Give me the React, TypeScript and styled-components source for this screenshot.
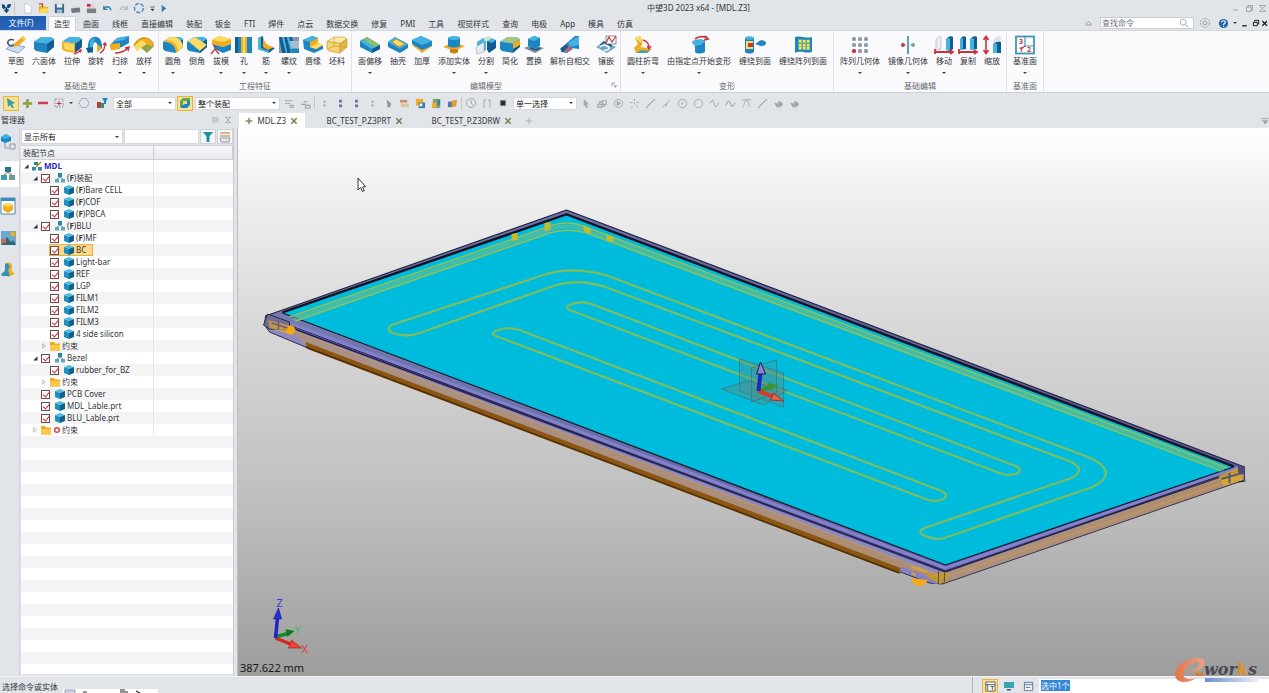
import React from "react";
import styled, { createGlobalStyle, css } from "styled-components";

const GlobalStyle = createGlobalStyle`
  * { box-sizing: border-box; }
  html, body { margin: 0; padding: 0; }
  body, button, input, select {
    font-family: "Noto Sans", "Noto Sans CJK SC", sans-serif;
    font-size: 8px;
    line-height: 12px;
    color: #33363b;
  }
  button { border: 0; padding: 0; background: none; }
  svg { display: block; flex: none; }
`;

/* palette */
const B1 = "#45b3e0";
const B2 = "#1c86c2";
const B3 = "#0f5d92";
const Y1 = "#fddb62";
const Y2 = "#f2ac1f";
const Y3 = "#c9800f";
const RED = "#c9343c";
const GRY = "#a4a8ae";

/* ---------- frame ---------- */

const Window = styled.div`
  display: flex;
  flex-direction: column;
  min-height: 100vh;
  background: #e1e4e9;
  overflow: hidden;
`;

const TitleBar = styled.header`
  display: grid;
  grid-template-columns: 1fr auto 1fr;
  align-items: center;
  height: 16px;
`;

const QuickAccess = styled.div`
  display: flex;
  align-items: center;
`;

const QuickButton = styled.button<{ $w?: number }>`
  display: flex;
  align-items: center;
  justify-content: center;
  width: ${(p) => p.$w ?? 16}px;
  height: 15px;
`;

const TitleText = styled.h1`
  margin: 0 0 0 128px;
  font-size: 8px;
  font-weight: 400;
  line-height: 12px;
  white-space: nowrap;
`;

const WindowButtons = styled.div`
  display: flex;
  justify-content: flex-end;
`;

const MenuBar = styled.nav`
  display: flex;
  height: 15px;
  gap: 1px;
  border-bottom: 1px solid #d3d7de;
`;

const FileTab = styled.button`
  width: 46px;
  margin-right: 1px;
  padding-right: 4px;
  background: linear-gradient(#1f5aae, #2a66bb);
  color: #fff;
`;

const MenuTab = styled.button<{ $active?: boolean }>`
  height: 15px;
  padding: 0 6px;
  white-space: nowrap;
  ${(p) =>
    p.$active &&
    css`
      background: #fbfbfd;
      border: 1px solid #cfd3da;
      border-bottom: 0;
      padding: 0 5px;
    `}
`;

const MenuRight = styled.div`
  display: flex;
  align-items: center;
  margin-left: auto;
`;

const SearchBox = styled.label`
  display: flex;
  align-items: center;
  width: 94px;
  height: 12px;
  margin: 0 3px 0 6px;
  padding-right: 4px;
  background: #fff;
  border: 1px solid #c9cdd3;
`;

const SearchInput = styled.input`
  flex: 1;
  min-width: 0;
  height: 10px;
  padding: 0 1px;
  border: 0;
  outline: 0;
  background: none;
  line-height: 10px;
  &::placeholder { color: #6d7178; }
`;

/* ---------- ribbon ---------- */

const RibbonBar = styled.div`
  display: flex;
  height: 62px;
  padding-left: 2px;
  background: #fafafc;
  border-bottom: 1px solid #cdd0d6;
`;

const RibbonGroup = styled.section`
  position: relative;
  display: flex;
  flex-direction: column;
  padding: 4px 2px 0;
  border-right: 1px solid #e0e2e7;
`;

const GroupItems = styled.div`
  display: flex;
  height: 45px;
`;

const GroupLabel = styled.div`
  text-align: center;
  color: #666a70;
`;

const RibbonButton = styled.button<{ $w: number }>`
  display: flex;
  flex-direction: column;
  align-items: center;
  width: ${(p) => p.$w}px;
  white-space: nowrap;
`;

const DownArrow = styled.i`
  width: 0;
  height: 0;
  border: 2px solid transparent;
  border-top-color: #3d4046;
  border-bottom: 0;
`;

const RibbonArrow = styled(DownArrow)`
  margin-top: 5px;
`;

const Launcher = styled.button`
  position: absolute;
  right: 2px;
  bottom: 3px;
`;

/* ---------- selection toolbar ---------- */

const ToolBar = styled.div`
  display: flex;
  align-items: center;
  height: 20px;
  padding-left: 3px;
`;

const ToolButton = styled.button<{ $on?: boolean; $w?: number }>`
  display: flex;
  align-items: center;
  justify-content: center;
  width: ${(p) => p.$w ?? 16}px;
  height: 15px;
  ${(p) =>
    p.$on &&
    css`
      background: #fbe08d;
      border: 1px solid #e2b53f;
    `}
`;

const ToolSeparator = styled.span`
  width: 1px;
  height: 12px;
  margin: 0 1px;
  background: #c3c6cc;
`;

const QuickSeparator = styled(ToolSeparator)`
  margin: 0 4px 0 2px;
`;

const SelectWrap = styled.label<{ $w: number; $flat?: boolean }>`
  position: relative;
  display: block;
  width: ${(p) => p.$w}px;
  margin: ${(p) => (p.$flat ? "0" : "0 1px 0 2px")};
  &::after {
    content: "";
    position: absolute;
    right: 4px;
    top: 50%;
    margin-top: -1px;
    border: 2px solid transparent;
    border-top-color: #34373c;
    border-bottom: 0;
  }
`;

const SelectBox = styled.select<{ $h?: number }>`
  display: block;
  appearance: none;
  width: 100%;
  height: ${(p) => p.$h ?? 13}px;
  padding: 0 2px;
  border: 1px solid #d6d9de;
  border-radius: 0;
  background: #fff;
  line-height: 11px;
  color: #17191c;
`;

/* ---------- document tabs ---------- */

const TabRow = styled.div`
  display: flex;
  height: 15px;
`;

const ManagerTitle = styled.div`
  display: flex;
  align-items: center;
  width: 239px;
  padding: 0 7px 2px 1px;
  flex: none;
`;

const ManagerButtons = styled.span`
  display: flex;
  gap: 5px;
  margin-left: auto;
`;

const DocTab = styled.div<{ $active?: boolean; $w: number }>`
  display: flex;
  align-items: center;
  justify-content: flex-end;
  gap: 4px;
  width: ${(p) => p.$w}px;
  padding-right: 7px;
  background: ${(p) => (p.$active ? "#fff" : "transparent")};
`;

const TabButton = styled.button`
  white-space: nowrap;
`;

/* ---------- manager panel ---------- */

const Body = styled.main`
  display: flex;
  flex: 1;
`;

const Rail = styled.nav`
  display: flex;
  flex-direction: column;
  gap: 6px;
  width: 20px;
  padding-top: 1px;
  border-right: 1px solid #cfd2d8;
`;

const RailButton = styled.button<{ $active?: boolean }>`
  display: flex;
  align-items: center;
  height: 26px;
  background: ${(p) => (p.$active ? "#fff" : "transparent")};
`;

const Panel = styled.aside`
  display: flex;
  flex-direction: column;
  width: 214px;
  padding: 0 0 2px 1px;
  border-right: 1px solid #c9ccd2;
`;

const FilterRow = styled.div`
  display: flex;
  align-items: center;
  gap: 1px;
  height: 17px;
`;

const FilterInput = styled.input`
  flex: 1;
  min-width: 0;
  height: 15px;
  border: 1px solid #d6d9de;
  background: #fff;
`;

const FilterButton = styled.button`
  display: flex;
  align-items: center;
  justify-content: center;
  width: 16px;
  height: 15px;
  background: #f4f5f7;
  border: 1px solid #cfd2d8;
`;

const TreeHeader = styled.div`
  display: grid;
  grid-template-columns: 133px 1fr;
  height: 15px;
  background: linear-gradient(#f7f8fa, #e6e8ec);
  border-top: 1px solid #cfd2d8;
  border-bottom: 1px solid #cfd2d8;
`;

const HeaderCell = styled.div`
  padding: 1px 2px;
  border-right: 1px solid #c9ccd2;
`;

const TreeList = styled.ul`
  flex: 1;
  margin: 0;
  padding: 0;
  list-style: none;
  background: repeating-linear-gradient(#fff 0 12px, #f4f4f4 12px 24px);
`;

const TreeRow = styled.li`
  display: grid;
  grid-template-columns: 133px 1fr;
  height: 12px;
`;

const TreeCell = styled.div<{ $depth: number }>`
  display: flex;
  align-items: center;
  height: 12px;
  padding-left: ${(p) => p.$depth * 9}px;
  border-right: 1px solid #e6e7ea;
  white-space: nowrap;
`;

const Twisty = styled.button`
  display: flex;
  justify-content: center;
  width: 10px;
`;

const NodeLabel = styled.label<{ $selected?: boolean; $root?: boolean }>`
  display: flex;
  align-items: center;
  gap: 1px;
  height: 12px;
  ${(p) =>
    p.$selected &&
    css`
      padding-right: 7px;
      background: #fcd98a;
      box-shadow: inset 0 0 0 1px #e6b048;
    `}
  ${(p) =>
    p.$root &&
    css`
      font-weight: 700;
      color: #2529b8;
    `}
`;

const Check = styled.input`
  appearance: none;
  position: relative;
  width: 9px;
  height: 9px;
  margin: 0 3px 0 1px;
  border: 1px solid #6b4a4a;
  background: #fff;
  &:checked::after {
    content: "";
    position: absolute;
    left: 2px;
    top: 0;
    width: 3px;
    height: 5px;
    border: solid #d0282c;
    border-width: 0 1px 1px 0;
    transform: rotate(40deg);
  }
`;

/* ---------- viewport ---------- */

const Viewport = styled.section`
  position: relative;
  flex: 1;
  min-width: 0;
  margin-left: 3px;
  border-left: 1px solid #b9bcc2;
  background: linear-gradient(#ffffff 0%, #f1f1f1 11%, #d9d9d9 35%, #bdbdbd 70%, #9d9d9d 100%);
`;

const Scene = styled.svg`
  width: 100%;
  height: 548px;
`;

const Measure = styled.div`
  position: absolute;
  left: 2px;
  bottom: 1px;
  font-size: 11px;
  line-height: 14px;
  color: #17181a;
`;

/* ---------- status bar ---------- */

const StatusBar = styled.footer`
  position: relative;
  display: flex;
  height: 17px;
  border-top: 1px solid #f2f3f5;
`;

const StatusText = styled.span`
  padding: 4px 5px 0 2px;
  white-space: nowrap;
`;

const StatusPopup = styled.span`
  display: flex;
  align-items: flex-start;
  align-self: flex-end;
  width: 95px;
  height: 4px;
  background: #fff;
`;

const StatusRight = styled.div`
  display: flex;
  align-items: center;
  gap: 3px;
  width: 297px;
  margin-left: auto;
  padding: 2px 0 0 9px;
  border-left: 1px solid #aeb1b7;
`;

const StatusField = styled.output`
  flex: 1;
  height: 14px;
  padding: 1px 2px;
  background: #fff;
`;

const Highlight = styled.mark`
  background: #3187d8;
  color: #fff;
`;

const Brand = styled.div`
  position: absolute;
  right: 9px;
  bottom: 9px;
  width: 86px;
  padding-left: 30px;
  font-family: "DejaVu Serif", serif;
  font-style: italic;
  font-weight: 700;
  font-size: 16px;
  line-height: 28px;
  white-space: nowrap;
  color: #4b4a50;
`;

const BrandSwoosh = styled.svg`
  position: absolute;
  left: 0;
  top: 0;
`;

const BrandAccent = styled.span`
  color: #e2901c;
`;

/* ---------- ribbon artwork, drawn on a 22 x 20 field ---------- */

const Block = ({ t = B1, l = B2, r = B3 }: { t?: string; l?: string; r?: string }) => (
  <g>
    <path d="M1 6.500 L8 2 H18 L21 4 L14 8.500Z" fill={t} />
    <path d="M1 6.500 L14 8.500 V18 L3 16 L1 14Z" fill={l} />
    <path d="M14 8.500 L21 4 V12 L14 18Z" fill={r} />
  </g>
);

const art: Record<string, React.ReactNode> = {
  sketch: (
    <g>
      <path d="M1 14 L7 9 L20 12 L13 18Z" fill="#c9ddf3" stroke="#6f93bf" strokeWidth=".8" />
      <path d="M9 5 C4 3 1 7 4 10 C6 12 10 11 11 8" fill="none" stroke="#4a5260" strokeWidth="1.500" />
      <path d="M8 12 L10 8 L18 1 L21 4 L13 11Z" fill={Y2} />
      <path d="M17 2 L20 5" stroke={Y1} strokeWidth="1.500" />
    </g>
  ),
  block: <Block />,
  extrude: (
    <g>
      <Block l={Y2} />
      <path d="M2 7.500 L13 9.500 V16 L4 14.500Z" fill={Y1} />
      <path d="M12 19 L18 16 L17 15 L21 14 L20 18 L19 17 L14 19.500Z" fill={RED} />
    </g>
  ),
  revolve: (
    <g>
      <path d="M3 15 C2 5 7 1 11 2 C15 2 17 6 17 13 L12 17 L12 9 C11 6 8 7 8 11 V18Z" fill={B2} />
      <path d="M5 14 C4 6 7 3 10 3 L8 9 L8 17Z" fill={B1} />
      <path d="M1 13 L8 12 V17 L3 18Z" fill={B3} />
      <path d="M12 9 L17 13 L12 17Z" fill={Y2} />
      <path d="M15 18 C19 16 20 13 20 9 M18 10 L20 8 L21.500 10.500" stroke={RED} strokeWidth="1.400" fill="none" />
    </g>
  ),
  sweep: (
    <g>
      <path d="M1 10 L8 3 L20 1 L20 8 L13 12 L2 15Z" fill={B2} />
      <path d="M8 3 L20 1 L15 5 L4 7Z" fill={B1} />
      <path d="M1 9 L11 8 V14 L2 15.500Z" fill={Y2} />
      <path d="M6 18 C11 18 15 17 19 13 M16 13 L20 12 L19 16" stroke={RED} strokeWidth="1.500" fill="none" />
    </g>
  ),
  loft: (
    <g>
      <path d="M1 11 C3 5 8 2 13 3 C18 4 21 8 20 12 L14 17 L9 12 L4 16Z" fill={Y2} />
      <path d="M1 11 L9 5 L14 9 L8 13 L4 16Z" fill={Y1} />
      <path d="M8 13 L14 9 L20 12 L14 18Z" fill="#8fa646" />
      <path d="M1 11 C3 5 8 2 13 3 C18 4 21 8 20 12" fill="none" stroke={Y3} />
    </g>
  ),
  fillet: (
    <g>
      <Block />
      <path d="M8 2 C15 1 21 6 21 12 L14 18 C14 11 9 7 2 6.500Z" fill={Y1} />
      <path d="M2 6.500 C9 7 14 11 14 18 L16 16 C16 10 11 6 4 5Z" fill={Y2} />
    </g>
  ),
  chamfer: (
    <g>
      <Block />
      <path d="M9 2 L21 10 L14 16 L2 6Z" fill={Y1} />
      <path d="M14 16 L21 10 V12 L14 18Z" fill={B3} />
    </g>
  ),
  draft: (
    <g>
      <path d="M2 5 L9 1 L21 4 L21 9 L13 12 L2 9Z" fill={Y2} />
      <path d="M2 5 L9 1 L21 4 L13 7Z" fill={Y1} />
      <path d="M2 9 L13 12 L21 9 V15 L13 18 L5 14Z" fill={B2} />
      <path d="M1 19 L5 14 L9 19 M5 14 V10" stroke={RED} strokeWidth="1.300" fill="none" />
    </g>
  ),
  hole: (
    <g>
      <path d="M2 2 H19 V18 H2Z" fill={B2} />
      <path d="M2 2 H5 V18 H2Z" fill={B3} />
      <path d="M8 2 H14 V18 H8Z" fill={Y2} />
      <path d="M10 2 H12 V18 H10Z" fill={Y1} />
    </g>
  ),
  rib: (
    <g>
      <path d="M3 3 L8 1 V10 L20 13 L14 18 L3 14Z" fill={B3} />
      <path d="M3 3 L6 2 V13 L14 16 V18 L3 14Z" fill={B1} />
      <path d="M8 1 C9 8 13 11 19 12 L13 15 L8 12Z" fill={Y2} />
    </g>
  ),
  thread: (
    <g>
      <path d="M1 2 H21 V18 H1Z" fill="#7f98b4" />
      <path d="M12 6 H21 V13 H12Z" fill="#a9bccf" />
      <path d="M1 2 L4 2 L8 18 H4Z M6 2 H9 L13 18 H9Z M11 2 H14 L15 6 H12Z" fill={B3} />
      <path d="M4 2 L6 2 L9 16 L8 18Z M9 2 L11 2 L14 16 L13 18Z" fill={B1} />
      <path d="M12 14 H21 V18 H14Z" fill={B2} />
    </g>
  ),
  lip: (
    <g>
      <path d="M1 5 L10 1 L16 3 V9 L21 11 V14 L12 18 L2 14Z" fill={B2} />
      <path d="M1 5 L10 1 L16 3 L8 7Z" fill={B1} />
      <path d="M8 7 L16 3 V8 L21 10 L14 14 L8 12Z" fill={Y2} />
      <path d="M8 12 L16 8 L21 10 L14 14Z" fill={Y1} />
    </g>
  ),
  stock: (
    <g stroke="#c99d3a" strokeWidth=".7">
      <Block t="#fdeaa6" l="#f5d56f" r="#e3b445" />
      <path d="M2 14 L8 11 L20 12 M8 11 V3" fill="none" />
    </g>
  ),
  offset: (
    <g>
      <path d="M1 6 L8 2 L21 10 V14 L13 18 L1 12Z" fill={B2} />
      <path d="M1 6 L8 2 L21 10 L13 14Z" fill="#8fbf62" />
      <path d="M1 6 L4 4 L16 12 L13 14Z" fill={B1} />
      <path d="M13 14 L21 10 V14 L13 18Z" fill={B3} />
    </g>
  ),
  shell: (
    <g>
      <path d="M1 7 L8 2 L21 9 V13 L13 18 L1 12Z" fill={B2} />
      <path d="M1 7 L8 2 L21 9 L13 14Z" fill={B1} />
      <path d="M5 7 L9 4 L18 9 L12 12Z" fill={Y1} stroke={Y3} strokeWidth=".8" />
    </g>
  ),
  thicken: (
    <g>
      <path d="M1 10 L10 6 L21 11 L11 18Z" fill={Y2} />
      <path d="M1 5 L10 1 L21 6 V11 L11 15 L1 9Z" fill={B2} />
      <path d="M1 5 L10 1 L21 6 L11 10Z" fill={B1} />
    </g>
  ),
  add: (
    <g>
      <path d="M0 12 L10 7 L22 11 L12 16Z" fill={Y2} />
      <path d="M7 14 H15 V17 C13 19 9 19 7 17Z" fill={Y3} />
      <path d="M5 3 V11 C7 13 15 13 17 11 V3Z" fill={B2} />
      <ellipse cx="11" cy="3" rx="6" ry="2" fill={B1} />
    </g>
  ),
  divide: (
    <g>
      <path d="M2 7 L8 3 L11 4 V15 L7 17 L2 14Z" fill={B1} />
      <path d="M12 6 L21 5 V13 L14 18 L12 15Z" fill={B3} />
      <path d="M12 6 L16 3 L21 5 L17 8Z" fill={B1} />
      <path d="M1 12 L9 7 V17 L2 19Z" fill="#e7ecf2" stroke="#9aa5b4" strokeWidth=".6" />
      <path d="M9 2 L15 1 V5 L9 6Z" fill="#cfe3d6" />
    </g>
  ),
  simplify: (
    <g>
      <Block t="#8fc7a0" />
      <path d="M14 8.500 L21 4 V10 L14 14Z" fill={Y2} />
      <path d="M6 4 L13 3 L18 5 L11 7Z" fill="#b8bf68" />
    </g>
  ),
  replace: (
    <g>
      <path d="M1 13 L9 10 L21 13 L12 18Z" fill="#7d8b98" />
      <path d="M5 4 L11 1 L17 3 V11 L11 14 L5 11Z" fill={B2} />
      <path d="M5 4 L11 1 L17 3 L11 6Z" fill={B1} />
      <path d="M7 13 L13 15 L17 13" stroke={B3} strokeWidth="1.500" fill="none" />
    </g>
  ),
  selfcross: (
    <g>
      <path d="M2 13 L16 1 L20 1 V14 L12 13 L8 18 L2 17Z" fill={B2} />
      <path d="M9 8 L20 1 V10 L11 12Z" fill={B1} />
      <path d="M1 14 L8 9 L14 14 L8 18Z" fill="#a8697a" />
      <path d="M1 14 L8 9 L9 12 L4 17Z" fill={B3} />
    </g>
  ),
  emboss: (
    <g>
      <path d="M1 12 L9 7 L21 12 L12 18Z" fill="#6fa4cc" />
      <path d="M5 12 C7 9 13 10 14 13 M9 15 C12 16 15 14 14 12" stroke="#fff" strokeWidth="1.500" fill="none" />
      <path d="M5 10 L9 7 L17 11" stroke={B3} strokeWidth="1.500" fill="none" />
      <path d="M11 1 H21 V9 H11Z" fill="#fff" stroke="#444" strokeWidth=".6" />
      <path d="M11 8 L14 2 L17 7 L21 1" stroke={RED} strokeWidth="1.200" fill="none" />
    </g>
  ),
  bend: (
    <g>
      <path d="M3 3 L8 1 C11 5 11 8 9 12 L4 18 L2 13 L6 9Z" fill={Y2} />
      <path d="M3 3 L8 1 C10 4 10 6 9 8Z" fill={Y1} />
      <path d="M4 18 L9 12 L20 14 L15 18Z" fill={Y2} />
      <path d="M4 18 L9 15 L18 16 L15 18Z" fill="#4c9fa8" />
      <path d="M11 5 C15 6 17 9 17 13 M15 11 L17 14 L19 11" stroke={RED} strokeWidth="1.300" fill="none" />
    </g>
  ),
  morph: (
    <g>
      <path d="M4 7 C8 4 14 4 17 6 V17 C13 19 9 19 7 17 V11Z" fill={B2} />
      <path d="M4 7 C8 4 14 4 17 6 L13 10 L7 11Z" fill={B1} />
      <path d="M7 4 C11 1 15 1 19 3 M17 1 L20 4 L16 5" stroke={RED} strokeWidth="1.800" fill="none" />
    </g>
  ),
  wrap: (
    <g>
      <path d="M1 3 V17 C3 19 8 19 10 17 V3Z" fill={B2} />
      <ellipse cx="5.500" cy="3" rx="4.500" ry="1.800" fill={B1} />
      <path d="M2 6 H9 V14 H2Z" fill={Y1} />
      <path d="M4 8 H9 V12 H4Z" fill={RED} />
      <path d="M11 9 L14 7 C16 4 22 5 22 8 C22 11 17 12 14 10Z" fill={B2} />
    </g>
  ),
  wraparray: (
    <g>
      <path d="M3 2 C9 0 13 4 20 2 V17 C13 19 9 15 3 18Z" fill={B2} />
      <path d="M6 4 C10 3 13 6 18 4 V15 C13 16 10 13 6 15Z" fill="#5fae8a" />
      {[7, 11, 15].map((x) => [5, 9, 12].map((y) => <rect key={`${x}${y}`} x={x} y={y} width="2.500" height="2.500" fill={Y1} />))}
    </g>
  ),
  pattern: (
    <g>
      {[3, 9, 15].map((x) =>
        [2, 8, 14].map((y) => (
          <rect key={`${x}-${y}`} x={x} y={y} width="4" height="4" rx="1.500" fill={x === 3 && y === 14 ? RED : "#8d9cae"} />
        ))
      )}
    </g>
  ),
  mirror: (
    <g>
      <path d="M11 1 V19" stroke="#4696a8" strokeWidth="1.800" />
      <path d="M4 10 H18" stroke="#9fc3cd" strokeWidth=".8" />
      <circle cx="6" cy="10" r="2" fill={RED} />
      <circle cx="16" cy="10" r="2" fill="#76a98b" />
    </g>
  ),
  move: (
    <g>
      <path d="M3 15 V5 C4 2 7 1 8 2 V14Z" fill="#eceff3" stroke="#a9b1bb" strokeWidth=".7" />
      <path d="M13 15 V5 C14 2 18 0 20 2 V14 L17 16Z" fill={B3} />
      <path d="M13 15 V5 C14 3 16 2 17 4 V15Z" fill={B1} />
      <path d="M2 17 H20 M17 15 L20 17 L17 19 M2 14 V19" stroke={RED} strokeWidth="1.800" fill="none" />
    </g>
  ),
  copy: (
    <g>
      <path d="M3 15 V5 C4 2 7 0 9 2 V14Z M13 15 V5 C14 2 18 0 20 2 V14Z" fill={B3} />
      <path d="M3 15 V5 C4 3 5 2 6 4 V15Z M13 15 V5 C14 3 16 2 17 4 V15Z" fill={B1} />
      <path d="M2 17 H20 M17 15 L20 17 L17 19 M2 14 V19" stroke={RED} strokeWidth="1.800" fill="none" />
    </g>
  ),
  scale: (
    <g>
      <path d="M5 2 V18 M2.500 5 L5 1.500 L7.500 5 M2.500 15 L5 18.500 L7.500 15" stroke={RED} strokeWidth="1.600" fill="none" />
      <path d="M12 17 V6 C13 3 17 0 20 2 V17Z" fill="#dfe5ec" />
      <path d="M12 18 V10 C13 7 17 6 20 7 V18Z" fill={B3} />
      <path d="M12 18 V10 C13 8 15 8 16 9 V18Z" fill={B1} />
    </g>
  ),
  datum: (
    <g>
      <rect x="2" y="1.500" width="18" height="17" fill="#fff" stroke="#3c97b4" strokeWidth="1.800" />
      <path d="M11 2 V11 H19" stroke="#3c97b4" strokeWidth="1.200" fill="none" />
      <path d="M11 11 L7 14" stroke={RED} strokeWidth="1.200" />
      <g fill={RED} fontSize="7" fontWeight="700">
        <text x="5" y="9">3</text>
        <text x="5" y="17">1</text>
        <text x="13" y="17">2</text>
      </g>
    </g>
  ),
};

const RibbonArt = ({ name }: { name: string }) => (
  <svg width="22" height="20" viewBox="0 0 22 20" aria-hidden="true">
    {art[name]}
  </svg>
);

type Tool = [label: string, icon: string, menu?: boolean];

const ribbon: { title: string; launcher?: boolean; tools: Tool[] }[] = [
  {
    title: "基础造型",
    tools: [
      ["草图", "sketch", true],
      ["六面体", "block", true],
      ["拉伸", "extrude"],
      ["旋转", "revolve"],
      ["扫掠", "sweep", true],
      ["放样", "loft", true],
    ],
  },
  {
    title: "工程特征",
    tools: [
      ["圆角", "fillet", true],
      ["倒角", "chamfer"],
      ["拔模", "draft", true],
      ["孔", "hole", true],
      ["筋", "rib", true],
      ["螺纹", "thread", true],
      ["唇缘", "lip"],
      ["坯料", "stock"],
    ],
  },
  {
    title: "编辑模型",
    launcher: true,
    tools: [
      ["面偏移", "offset", true],
      ["抽壳", "shell"],
      ["加厚", "thicken"],
      ["添加实体", "add", true],
      ["分割", "divide", true],
      ["简化", "simplify"],
      ["置换", "replace"],
      ["解析自相交", "selfcross"],
      ["镶嵌", "emboss", true],
    ],
  },
  {
    title: "变形",
    tools: [
      ["圆柱折弯", "bend", true],
      ["由指定点开始变形", "morph", true],
      ["缠绕到面", "wrap"],
      ["缠绕阵列到面", "wraparray"],
    ],
  },
  {
    title: "基础编辑",
    tools: [
      ["阵列几何体", "pattern", true],
      ["镜像几何体", "mirror", true],
      ["移动", "move", true],
      ["复制", "copy"],
      ["缩放", "scale"],
    ],
  },
  { title: "基准面", tools: [["基准面", "datum", true]] },
];

const toolWidth = (label: string) => (label.length === 1 ? 22 : label.length * 8 + 8);

/* ---------- small artwork, drawn on a 12 x 12 field ---------- */

const S = ({ children, size = 12 }: { children: React.ReactNode; size?: number }) => (
  <svg width={size} height={size} viewBox="0 0 12 12" fill="none" aria-hidden="true">
    {children}
  </svg>
);

const small: Record<string, React.ReactNode> = {
  logo: (
    <g>
      <path d="M1 1 L4 2 L5 5 L3 7 L1 5Z M6 3 L8 1 L11 1 L10 5 L8 6Z M3 8 L6 6 L9 8 L6 11Z" fill="#1d5c8c" />
      <path d="M2 3 L6 6 L10 2 M6 6 V11" stroke="#123b5c" strokeWidth="1.200" />
    </g>
  ),
  file: <path d="M3 1 H7 L10 4 V11 H3Z" fill="#fff" stroke="#b6bac0" strokeWidth=".7" />,
  open: (
    <g>
      <path d="M1 3 H5 L6 4 H11 V11 H1Z" fill={Y2} />
      <path d="M3 6 H12 L10 11 H1Z" fill={Y1} />
      <path d="M1 1 L5 1 L5 4" stroke={RED} strokeWidth="1.300" />
    </g>
  ),
  save: (
    <g>
      <path d="M1 1 H11 V11 H1Z" fill="#33678f" />
      <path d="M3 1 H9 V5 H3Z" fill="#e8edf2" />
      <path d="M3 7 H9 V11 H3Z" fill="#9fb9cc" />
    </g>
  ),
  print: (
    <g>
      <path d="M3 3 H10 L9 6 H3Z" fill="#d9dce0" />
      <path d="M1 6 L11 5 V10 L2 11Z" fill="#72777f" />
    </g>
  ),
  print2: (
    <g>
      <path d="M2 2 H9 V6 H2Z" fill="#e6cfd0" />
      <path d="M1 6 H11 V11 H1Z" fill="#7b7f86" />
      <path d="M1 1 H5 V4 H1Z" fill={RED} />
    </g>
  ),
  undo: <path d="M2 7 C4 3 8 3 10 8 M2 3 V7 H6" stroke="#3482ad" strokeWidth="1.500" />,
  redo: <path d="M10 7 C8 3 4 3 2 8 M10 3 V7 H6" stroke="#b5b9c0" strokeWidth="1.300" />,
  regen: <circle cx="6" cy="6" r="4.500" stroke="#4f97b5" strokeWidth="1.600" strokeDasharray="4 1.500" />,
  play: <path d="M4 2 L9 6 L4 10Z" fill="#2d86b2" />,
  more: <path d="M3 4 H9 M4 7 H8 L6 9Z" stroke="#222" fill="#222" strokeWidth=".9" />,
  min: <path d="M3 8 H9" stroke="#8e9298" />,
  restore: <path d="M2 4 H8 V10 H2Z M4 4 V2 H10 V8 H8" stroke="#8e9298" />,
  close: <path d="M2 2 L10 10 M10 2 L2 10 M2 2 H10 M2 10 H10" stroke="#8e9298" strokeWidth=".9" />,
  bmin: <path d="M3 9 H9" stroke="#1d1f22" strokeWidth="1.800" />,
  brestore: <path d="M2 5 H8 V10 H2Z M4 4 V2 H10 V8" stroke="#1d1f22" strokeWidth="1.500" />,
  bclose: <path d="M2 3 L9 10 M9 3 L2 10" stroke="#1d1f22" strokeWidth="2" />,
  up: <path d="M3 8 V6 L6 3.500 L9 6 V8Z" stroke="#85898f" />,
  search: <path d="M5 1.500 A3.500 3.500 0 1 0 5.100 1.500 M8 8 L11 11" stroke="#8d9299" />,
  gear: (
    <g stroke="#9a9ea5">
      <circle cx="6" cy="6" r="4.500" strokeDasharray="2 1" />
      <circle cx="6" cy="6" r="2" />
    </g>
  ),
  help: (
    <g>
      <circle cx="6" cy="6" r="5" fill="#2767a8" />
      <path d="M4 4.500 C4 2.500 8 2.500 8 4.500 C8 6 6 6 6 7.500 M6 8.500 V9.500" stroke="#fff" strokeWidth="1.200" />
    </g>
  ),
  pick: <path d="M2 1 L10 6 L7 7 L9 11 L7 11 L5 8 L3 10Z" fill="#2ba3b0" />,
  plus: <path d="M6 1 V11 M1 6 H11" stroke="#8fa33a" strokeWidth="2.800" />,
  minus: <path d="M1 6 H11" stroke="#cc3d49" strokeWidth="2.500" />,
  frame: (
    <g>
      <path d="M2 2 H10 V10 H2Z" stroke="#91959b" strokeDasharray="2 1" />
      <path d="M6 4 V9 M3.500 6.500 H8.500" stroke={RED} />
    </g>
  ),
  hex: <path d="M3.500 1.500 H8.500 L11 6 L8.500 10.500 H3.500 L1 6Z" stroke="#7fa6bb" strokeDasharray="2 .7" />,
  filter: (
    <g>
      <path d="M1 5 H5 V11 H1Z" fill={RED} />
      <path d="M4 6 H8 V11 H4Z" fill="#3a8c5b" />
      <path d="M6 1 H12 L10 4 V7 H8 V4Z" fill={B2} />
    </g>
  ),
  whole: (
    <g>
      <path d="M1 4 L4 1 H11 V4 L8 6 H4 V8 L1 9Z" fill="#58a65a" />
      <path d="M4 8 L8 6 V4 H11 V8 L8 11 H2 L1 9Z" fill={B2} />
      <path d="M4 4 H8 V7 H4Z" fill={Y1} />
    </g>
  ),
  list: <path d="M1 3 H9 M1 6 H7 M6 8 H11 M6 10 H11" stroke={GRY} strokeWidth="1.300" />,
  list2: <path d="M1 7 H7 M4 4 H8 M6 8 H11 V11 H6Z" stroke={GRY} strokeWidth="1.300" />,
  dot: <path d="M5 3 H7 V5 H5Z M5 7 H7 V9 H5Z" fill="#8fa0b2" />,
  dotb: <path d="M4.500 2 H7.500 V5 H4.500Z M4.500 7 H7.500 V10 H4.500Z" fill="#50779f" />,
  hand: <path d="M4 2 L9 6 L8 10 L5 10Z" fill="#8d98a5" />,
  sheet: (
    <g>
      <path d="M1 2 H9 V5 H1Z" fill="#cf8d70" />
      <path d="M2 6 H11 V10 H2Z" fill="#d7c99a" />
    </g>
  ),
  gold: (
    <g>
      <path d="M1 1 H9 V8 H1Z" fill={Y2} />
      <path d="M4 5 H11 V11 H4Z" fill="#3d7cab" />
      <path d="M5 6 H8 V9 H5Z" fill="#fff" />
    </g>
  ),
  green: (
    <g>
      <path d="M2 1 H10 V11 H2Z" fill="#7aa37a" />
      <path d="M1 6 L6 4 V10 L1 11Z" fill={Y2} />
      <path d="M7 2 H10 V8 H7Z" fill="#367fa3" />
    </g>
  ),
  truck: (
    <g>
      <path d="M1 4 H6 V10 H1Z" fill="#51779a" />
      <path d="M5 3 L11 2 L10 9 L5 10Z" fill="#dd9b3d" />
    </g>
  ),
  circled: (
    <g stroke={GRY}>
      <circle cx="6" cy="6" r="4.500" />
      <path d="M6 3 V6 L8 8" />
    </g>
  ),
  pair: <path d="M3 11 V3 H5 M7 3 H9 V11" stroke={GRY} />,
  black: (
    <g>
      <path d="M2 2 H10 V10 H2Z" fill="#c8cbd0" />
      <path d="M3 3 H9 V9 H3Z" fill="#2c2e31" />
    </g>
  ),
  arrow: <path d="M3 1 L9 7 L6 7 L8 11 L6 11 L4 8 L3 9Z" fill={GRY} />,
  links: <path d="M1 7 H5 V10 H1Z M6 3 H10 V7 H6Z M3 7 V4 H6 M8 7 V9 H5" stroke={GRY} strokeWidth="1.300" />,
  target: (
    <g>
      <circle cx="6" cy="6" r="4.500" stroke={GRY} />
      <path d="M4 3 L9 6 L4 9Z" fill={GRY} />
    </g>
  ),
  spread: <path d="M1 5 H4 M8 5 H11 M6 5 V7 M4 9 L2 11 M8 8 L10 10 M6 1 V3" stroke={GRY} />,
  line: <path d="M1 11 L11 1" stroke={GRY} strokeWidth="1.200" />,
  shortline: <path d="M2 10 L10 2 M5 9 L7 5" stroke={GRY} />,
  center: (
    <g>
      <circle cx="6" cy="6" r="4.500" stroke={GRY} />
      <circle cx="6" cy="6" r="1" fill={GRY} />
    </g>
  ),
  circle: <circle cx="6" cy="6" r="4.500" stroke={GRY} />,
  zig: <path d="M1 6 L4 2 L7 10 L11 5" stroke={GRY} />,
  wave: <path d="M1 8 C3 2 5 3 6 6 C7 10 9 10 11 5" stroke={GRY} strokeWidth="1.200" />,
  arch: <path d="M2 10 C4 8 3 3 6 3 C9 3 8 8 10 10 M1 2 H11" stroke={GRY} />,
  cup: <path d="M1 5 L5 6 L6 3 L10 5 L11 7 L8 10 H4Z" fill={GRY} />,
  funnel: <path d="M1 1 H11 L7.500 5.500 V11 H4.500 V5.500Z" fill="#238fa8" />,
  notes: (
    <g>
      <path d="M1 2 H11 M1 5 H11" stroke="#d0a37a" strokeWidth="1.500" />
      <path d="M1 7 H11 L10 11 H2Z" fill="#e3e6ea" stroke="#85898f" strokeWidth=".8" />
    </g>
  ),
  part: (
    <g>
      <path d="M1 3 L6 1 L11 3 L6 5Z" fill="#54bddf" />
      <path d="M1 3 L6 5 V11 L1 9Z" fill="#1f90c0" />
      <path d="M6 5 L11 3 V9 L6 11Z" fill="#12618d" />
    </g>
  ),
  asm: (
    <g>
      <path d="M4 1 H8 V5 H4Z" fill="#2c86a6" />
      <path d="M1 7 H5 V10.500 H1Z M7 7 H11 V10.500 H7Z" fill="#58a9c5" />
      <path d="M3 7 L6 5 L9 7" stroke="#52707e" strokeWidth=".8" />
    </g>
  ),
  root: (
    <g>
      <path d="M3 2 H7 V5 H3Z M1 7 H5 V10.500 H1Z M7 7 H11 V10.500 H7Z" fill="#2c86a6" />
      <path d="M10 2 L5 7" stroke={Y3} strokeWidth="1.500" />
    </g>
  ),
  folder: (
    <g>
      <path d="M1 2 H5 L6 3.500 H11 V10.500 H1Z" fill={Y2} />
      <path d="M1 5 H11 V10.500 H1Z" fill="#fbc84b" />
    </g>
  ),
  ring: <circle cx="6" cy="6" r="3.500" stroke="#d5434a" strokeWidth="2.200" />,
  opened: <path d="M9 4 V9 H4Z" fill="#2b2d30" />,
  closed: <path d="M4 2.500 L8.500 6 L4 9.500Z" stroke="#9a9da2" />,
  pin: <path d="M2 2 H10 V9 H2Z M4 4 H8 V7 H4Z" stroke="#a8acb2" />,
  tabplus: <path d="M6 1 V11 M1 6 H11" stroke="#84885a" strokeWidth="2.200" />,
  tabx: <path d="M2 2 L10 10 M10 2 L2 10" stroke="#7d7749" strokeWidth="2.200" />,
  addtab: <path d="M6 1 V11 M1 6 H11" stroke="#a7aaaf" strokeWidth="1.300" />,
  tabmenu: <path d="M1 2 H11 M1 5 H11 M4 7 H9 L6 10Z" stroke="#898d93" fill="#898d93" />,
  launch: <path d="M3 8 V3 H8 M5 5 L9 9 M9 6 V9 H6" stroke="#7b7f85" />,
  grid: (
    <g>
      <path d="M1 1 H11 V11 H1Z" fill="#fff" stroke="#55585d" />
      <path d="M3 3 V10 M1 4 H11 M6 6 H10 M8 6 V10" stroke="#55585d" />
    </g>
  ),
  monitor: (
    <g>
      <path d="M1 2 H11 V8 H1Z" fill="#3ba3ad" />
      <path d="M4 9 H8 V10.500 H4Z" fill="#395c74" />
    </g>
  ),
  pane: <path d="M1.500 1.500 H10.500 V10.500 H1.500Z M1.500 4 H10.500 M3 7 H8" fill="#eef3fa" stroke="#5b7392" />,
};

const Small = ({ name, size }: { name: string; size?: number }) => <S size={size}>{small[name]}</S>;

/* ---------- manager rail artwork, drawn on an 18 x 18 field ---------- */

const railArt: React.ReactNode[] = [
  <g key="history">
    <path d="M1 4 L6 1 L11 4 V8 L5 10 L1 8Z" fill={B2} />
    <path d="M1 4 L6 1 L11 4 L5 6Z" fill={B1} />
    <path d="M5 10 V15 H9 M10 11 H15 V16 H10Z" fill="none" stroke="#8f99a6" />
  </g>,
  <g key="assembly">
    <path d="M5 2 H11 V7 H5Z" fill="#28758e" />
    <path d="M1 10 H7 V15 H1Z" fill="#3b9db4" />
    <path d="M9 10 H15 V15 H9Z" fill="#6f9a92" />
    <path d="M8 7 L4 10 M8 7 L12 10" stroke="#666" />
  </g>,
  <g key="view">
    <path d="M1 1 H15 V17 H1Z" fill="#fff" stroke="#4a88ad" />
    <path d="M1 1 H15 V4 H1Z" fill="#3b8fb9" />
    <path d="M3 8 L8 6 L13 8 V13 L8 16 L3 13Z" fill={Y2} />
    <path d="M3 8 L8 6 L13 8 L8 10Z" fill={Y1} />
  </g>,
  <g key="visual">
    <path d="M1 2 H16 V16 H1Z" fill="#6aa9cf" />
    <path d="M1 16 L7 8 L11 13 L13 11 L16 16Z" fill="#37637a" />
    <circle cx="13" cy="5" r="2.500" fill={Y2} />
    <path d="M1 10 H6 V14 H1Z" fill="#b9734d" />
  </g>,
  <g key="user">
    <path d="M6 2 C11 0 14 5 11 9 L15 13 L8 16 L4 12Z" fill={Y2} />
    <path d="M5 3 C9 1 11 6 8 9 L10 15 L2 15 L1 13 L5 10Z" fill="#2f93bd" />
  </g>,
];

/* ---------- data ---------- */

const menus = ["造型", "曲面", "线框", "直接编辑", "装配", "钣金", "FTI", "焊件", "点云", "数据交换", "修复", "PMI", "工具", "视觉样式", "查询", "电极", "App", "模具", "仿真"];

interface Node {
  text: string;
  fixed?: boolean;
  depth: number;
  icon: string;
  open?: boolean;
  closed?: boolean;
  check?: boolean;
  selected?: boolean;
  ring?: boolean;
}

const part = (text: string, depth = 2, extra: Partial<Node> = {}): Node => ({ text, depth, icon: "part", check: true, ...extra });

const nodes: Node[] = [
  { text: "MDL", depth: 0, icon: "root", open: true },
  { text: "装配", fixed: true, depth: 1, icon: "asm", open: true, check: true },
  part("Bare CELL", 2, { fixed: true }),
  part("COF", 2, { fixed: true }),
  part("PBCA", 2, { fixed: true }),
  { text: "BLU", fixed: true, depth: 1, icon: "asm", open: true, check: true },
  part("MF", 2, { fixed: true }),
  part("BC", 2, { selected: true }),
  part("Light-bar"),
  part("REF"),
  part("LGP"),
  part("FILM1"),
  part("FILM2"),
  part("FILM3"),
  part("4 side silicon"),
  { text: "约束", depth: 2, icon: "folder", closed: true },
  { text: "Bezel", depth: 1, icon: "asm", open: true, check: true },
  part("rubber_for_BZ"),
  { text: "约束", depth: 2, icon: "folder", closed: true },
  part("PCB Cover", 1),
  part("MDL_Lable.prt", 1),
  part("BLU_Lable.prt", 1),
  { text: "约束", depth: 1, icon: "folder", closed: true, ring: true },
];

const snapTools = ["arrow", "links", "target", "spread", "line", "shortline", "center", "circle", "zig", "wave", "arch", "line", "cup", "cup"];

/* ---------- pieces ---------- */

const Dropdown = ({ label, value, width, flat, height }: { label: string; value: string; width: number; flat?: boolean; height?: number }) => (
  <SelectWrap $w={width} $flat={flat}>
    <SelectBox aria-label={label} $h={height} defaultValue={value}>
      <option>{value}</option>
    </SelectBox>
  </SelectWrap>
);

const TreeNode = ({ node }: { node: Node }) => (
  <TreeRow>
    <TreeCell $depth={node.depth}>
      <Twisty aria-label="展开">
        {node.open && <Small name="opened" size={10} />}
        {node.closed && <Small name="closed" size={8} />}
      </Twisty>
      <NodeLabel $selected={node.selected} $root={node.depth === 0}>
        {node.check && <Check type="checkbox" defaultChecked />}
        <Small name={node.icon} />
        {node.ring && <Small name="ring" size={8} />}
        <span>
          {node.fixed && (
            <>
              (<b>F</b>)
            </>
          )}
          {node.text}
        </span>
      </NodeLabel>
    </TreeCell>
  </TreeRow>
);

const Model = () => (
  <Scene viewBox="239 128 1030 548" preserveAspectRatio="xMidYMid meet" aria-label="MDL">
    <defs>
      <linearGradient id="side" x1="0" x2="1">
        <stop offset="0" stopColor="#a99187" />
        <stop offset="1" stopColor="#ad8d70" />
      </linearGradient>
      <linearGradient id="rim" x1="0" x2="1">
        <stop offset="0" stopColor="#747bb0" />
        <stop offset="1" stopColor="#5a5794" />
      </linearGradient>
    </defs>
    <g strokeLinejoin="round">
      {/* side walls */}
      <path d="M266 316 L946 570 L943 584 L930 583 L306 347 L270 332 L265 325Z" fill="#8d8abf" stroke="#2e2b55" strokeWidth="1" />
      <path d="M290 329 L942 576 L940 584 L901 570 L306 345Z" fill="url(#side)" />
      <path d="M306 342 L901 568 L901 573 L895 572 L308 349Z" fill="#8a5612" />
      <path d="M306 347 L900 573" stroke="#4e2f08" strokeWidth="1.500" />
      <path d="M290 329 L942 576" stroke="#c09a6c" strokeWidth="1" />
      <path d="M946 570 L1245 468 L1245 480 L943 584Z" fill="url(#side)" stroke="#3a3350" strokeWidth="1" />
      <path d="M946 577 L1235 479" stroke="#c59657" strokeWidth="1.500" />
      <path d="M901 569 L938 582" stroke="#8380c4" strokeWidth="5" />
      {/* bezel */}
      <path d="M266 316 L567 210 L1245 467 L946 572Z" fill="url(#rim)" stroke="#22203f" strokeWidth="1.200" />
      <path d="M268 319 L946 572" stroke="#322f68" strokeWidth="1.500" />
      <path d="M276 318 L946 568 L1240 467" fill="none" stroke="#8280cf" strokeWidth="3" />
      <path d="M274 321 L946 571 L1242 470" fill="none" stroke="#25224c" strokeWidth="1" />
      <path d="M283 313 L567 215 L1234 467 L946 565Z" fill="#00bcdc" stroke="#17172b" strokeWidth="1.200" />
      <path d="M283 312 L567 214 L1234 466" fill="none" stroke="#111120" strokeWidth="1.800" />
      {/* beads and channels on the back cover */}
      <path d="M294 319 L549 230 Q568 222 588 231 L1225 469" fill="none" stroke="#69c08e" strokeWidth="4" opacity=".6" />
      <g fill="none" stroke="#8fc05a" strokeWidth="1.600">
        <path d="M290 317 L548 227 Q567 219 586 227 L1228 468" />
        <path d="M296 321 L550 233 Q569 227 590 234 L1222 471" />
      </g>
      <g fill="none" stroke="#7dbd61" strokeWidth="2.300">
        <path d="M392 325 L544 275 Q570 266 606 275 L1091 458 Q1121 473 1093 487 L945 538 Q934 541 922 534 Q918 530 928 527 L1072 478 Q1087 470 1072 462 L606 287 Q578 278 554 286 L420 333 Q407 338 393 333 Q386 329 392 325Z" />
        <path d="M570 305 Q580 300 592 304 L1016 466 Q1024 470 1018 473 Q1010 477 1000 473 L573 311 Q564 308 570 305Z" />
        <path d="M496 331 Q507 326 520 330 L942 491 Q950 495 944 499 Q935 503 926 499 L499 337 Q490 334 496 331Z" />
      </g>
      <g fill="#c4bc31">
        <path d="M512 234 L518 233 V240 L512 241Z M545 223 L551 222 V230 L545 231Z M584 225 L591 228 V234 L584 231Z M607 234 L614 237 V242 L607 240Z" />
      </g>
      {/* corner hardware */}
      <path d="M264 325 L268 314 L290 322 L290 330 L270 329Z" fill="#6f6c97" stroke="#29264a" strokeWidth="1" />
      <path d="M269 320 L292 326 L297 331 L292 335 L270 328Z" fill="#dea52e" opacity=".75" />
      <circle cx="291" cy="330" r="4.500" fill="#f2ab16" />
      <path d="M272 323 L288 328 M279 321 V330" stroke="#675d83" strokeWidth="1.500" />
      <path d="M1219 476 L1240 467 L1243 480 L1224 486Z" fill="#dcac27" opacity=".8" />
      <path d="M1222 479 L1239 474 M1230 473 V483" stroke="#5f5574" strokeWidth="2" />
      <path d="M1238 464 L1246 468 L1244 474 L1239 475Z" fill="#4f4a7c" />
      <path d="M1239 482 L1246 481" stroke="#222" />
      <path d="M912 578 A8 7 0 0 0 928 580Z" fill="#f2aa1b" />
      <path d="M912 567 L928 572 M912 573 L916 575" stroke="#dba435" strokeWidth="2" />
      <path d="M928 574 L948 572 L948 580 L941 584 L928 578Z" fill="#c79a25" opacity=".85" />
      <path d="M939 571 V584 M945 572 V582" stroke="#61551f" strokeWidth="1" />
      {/* centre triad with its datum planes */}
      <g stroke="#3b7777" strokeWidth=".7" fill="#5d8a80">
        <path d="M740 359 L784 373 V407 L740 391Z" fillOpacity=".35" />
        <path d="M722 389 L748 381 L788 390 L764 405Z" fillOpacity=".4" />
        <path d="M752 368 L777 360 V393 L752 402Z" fillOpacity=".25" />
      </g>
      <path d="M760 391 L771 387" stroke="#34952a" strokeWidth="3.500" />
      <path d="M768 383 L779 385 L770 391Z" fill="#3d9530" />
      <path d="M759 391 L775 397" stroke="#dc3a25" strokeWidth="4" />
      <path d="M774 393 L784 401 L771 400Z" fill="#e8604c" stroke="#a22016" strokeWidth=".8" />
      <path d="M759 391 L761 373" stroke="#1e27b9" strokeWidth="4" />
      <path d="M757 374 L761 362 L766 374Z" fill="#8a85cf" stroke="#19195e" strokeWidth="1" />
    </g>
    {/* orientation triad */}
    <g>
      <path d="M276 637 L290 633" stroke="#128b2a" strokeWidth="3.500" />
      <path d="M286 629 L295 631 L288 637Z" fill="#0d7a25" />
      <path d="M276 638 L291 644" stroke="#d8271c" strokeWidth="3.500" />
      <path d="M292 640 L302 648 L289 648Z" fill="#ee4437" stroke="#9d1c14" strokeWidth=".6" />
      <path d="M276 638 L278 618" stroke="#1c25c8" strokeWidth="3.500" />
      <path d="M274 619 L279 608 L282 619Z" fill="#2630dc" stroke="#131875" strokeWidth=".6" />
      <g fontSize="11">
        <text x="277" y="607" fill="#333bd6">Z</text>
        <text x="295" y="634" fill="#45bd5e">Y</text>
        <text x="302" y="653" fill="#e23b33">X</text>
      </g>
    </g>
    {/* mouse pointer */}
    <path d="M358.500 178 V190 L361 187.500 L363 191.500 L364.800 190.600 L363 187 L366 186.600Z" fill="#fff" stroke="#222" strokeWidth=".9" />
  </Scene>
);

export default function App() {
  return (
    <Window>
      <GlobalStyle />
      <TitleBar>
        <QuickAccess>
          <QuickButton $w={12} aria-label="应用菜单"><Small name="logo" size={11} /></QuickButton>
          <QuickSeparator />
          <QuickButton aria-label="新建"><Small name="file" size={11} /></QuickButton>
          <QuickButton aria-label="打开"><Small name="open" size={11} /></QuickButton>
          <QuickButton aria-label="保存"><Small name="save" size={11} /></QuickButton>
          <QuickButton aria-label="打印"><Small name="print" size={11} /></QuickButton>
          <QuickButton aria-label="批量打印"><Small name="print2" size={11} /></QuickButton>
          <QuickButton aria-label="撤销"><Small name="undo" size={11} /></QuickButton>
          <QuickButton aria-label="重做"><Small name="redo" size={11} /></QuickButton>
          <QuickButton aria-label="重生成"><Small name="regen" /></QuickButton>
          <QuickButton $w={11} aria-label="更多"><Small name="more" size={9} /></QuickButton>
          <QuickButton $w={11} aria-label="展开工具栏"><Small name="play" size={11} /></QuickButton>
        </QuickAccess>
        <TitleText>中望3D 2023 x64 - [MDL.Z3]</TitleText>
        <WindowButtons>
          <QuickButton $w={14} aria-label="最小化"><Small name="min" size={9} /></QuickButton>
          <QuickButton $w={14} aria-label="还原"><Small name="restore" size={9} /></QuickButton>
          <QuickButton $w={13} aria-label="关闭"><Small name="close" size={9} /></QuickButton>
        </WindowButtons>
      </TitleBar>

      <MenuBar>
        <FileTab>文件(F)</FileTab>
        {menus.map((m, i) => (
          <MenuTab key={m} $active={i === 0}>{m}</MenuTab>
        ))}
        <MenuRight>
          <QuickButton $w={12} aria-label="收起功能区"><Small name="up" size={9} /></QuickButton>
          <SearchBox>
            <SearchInput placeholder="查找命令" aria-label="查找命令" />
            <Small name="search" size={10} />
          </SearchBox>
          <QuickButton aria-label="设置"><Small name="gear" size={12} /></QuickButton>
          <QuickButton $w={20} aria-label="帮助"><Small name="help" size={11} /></QuickButton>
          <DownArrow />
          <QuickButton $w={14} aria-label="最小化文档"><Small name="bmin" size={9} /></QuickButton>
          <QuickButton $w={10} aria-label="还原文档"><Small name="brestore" size={8} /></QuickButton>
          <QuickButton $w={8} aria-label="关闭文档"><Small name="bclose" size={8} /></QuickButton>
        </MenuRight>
      </MenuBar>

      <RibbonBar>
        {ribbon.map((group) => (
          <RibbonGroup key={group.title}>
            <GroupItems>
              {group.tools.map(([label, icon, menu]) => (
                <RibbonButton key={label} $w={toolWidth(label)}>
                  <RibbonArt name={icon} />
                  <span>{label}</span>
                  {menu && <RibbonArrow />}
                </RibbonButton>
              ))}
            </GroupItems>
            <GroupLabel>{group.title}</GroupLabel>
            {group.launcher && (
              <Launcher aria-label="更多选项"><Small name="launch" size={8} /></Launcher>
            )}
          </RibbonGroup>
        ))}
      </RibbonBar>

      <ToolBar>
        <ToolButton $on aria-label="选择"><Small name="pick" /></ToolButton>
        <ToolButton aria-label="添加"><Small name="plus" size={11} /></ToolButton>
        <ToolButton aria-label="移除"><Small name="minus" size={12} /></ToolButton>
        <ToolButton aria-label="框选"><Small name="frame" /></ToolButton>
        <ToolButton $w={8} aria-label="框选方式"><DownArrow /></ToolButton>
        <ToolButton $w={18} aria-label="多边形选择"><Small name="hex" /></ToolButton>
        <ToolButton $w={18} aria-label="过滤器"><Small name="filter" /></ToolButton>
        <Dropdown label="过滤类型" value="全部" width={63} />
        <ToolButton $on aria-label="范围"><Small name="whole" /></ToolButton>
        <Dropdown label="选择范围" value="整个装配" width={85} />
        <ToolButton aria-label="列表"><Small name="list" size={11} /></ToolButton>
        <ToolButton aria-label="子列表"><Small name="list2" size={11} /></ToolButton>
        <ToolSeparator />
        {["dot", "dotb", "dotb", "dot", "hand", "sheet", "gold", "green", "truck"].map((n, i) => (
          <ToolButton key={i} aria-label={`工具 ${i + 1}`}><Small name={n} size={11} /></ToolButton>
        ))}
        <ToolSeparator />
        <ToolButton aria-label="时间"><Small name="circled" /></ToolButton>
        <ToolButton aria-label="配对"><Small name="pair" /></ToolButton>
        <ToolButton aria-label="实体"><Small name="black" size={10} /></ToolButton>
        <Dropdown label="选择方式" value="单一选择" width={64} />
        {snapTools.map((n, i) => (
          <ToolButton key={i} aria-label={`捕捉 ${i + 1}`}><Small name={n} size={11} /></ToolButton>
        ))}
      </ToolBar>

      <TabRow>
        <ManagerTitle>
          管理器
          <ManagerButtons>
            <button aria-label="固定"><Small name="pin" size={8} /></button>
            <button aria-label="关闭管理器"><Small name="close" size={8} /></button>
          </ManagerButtons>
        </ManagerTitle>
        <DocTab $active $w={66}>
          <Small name="tabplus" size={8} />
          <TabButton>MDL.Z3</TabButton>
          <button aria-label="关闭 MDL.Z3"><Small name="tabx" size={8} /></button>
        </DocTab>
        <DocTab $w={105}>
          <TabButton>BC_TEST_P.Z3PRT</TabButton>
          <button aria-label="关闭 BC_TEST_P.Z3PRT"><Small name="tabx" size={8} /></button>
        </DocTab>
        <DocTab $w={109}>
          <TabButton>BC_TEST_P.Z3DRW</TabButton>
          <button aria-label="关闭 BC_TEST_P.Z3DRW"><Small name="tabx" size={8} /></button>
        </DocTab>
        <ToolButton $w={20} aria-label="新建标签"><Small name="addtab" size={8} /></ToolButton>
        <MenuRight>
          <button aria-label="标签列表"><Small name="tabmenu" size={8} /></button>
        </MenuRight>
      </TabRow>

      <Body>
        <Rail>
          {railArt.map((a, i) => (
            <RailButton key={i} $active={i === 1} aria-label={`管理器 ${i + 1}`}>
              <svg width="18" height="18" viewBox="0 0 18 18" aria-hidden="true">{a}</svg>
            </RailButton>
          ))}
        </Rail>
        <Panel>
          <FilterRow>
            <Dropdown label="显示" value="显示所有" width={102} flat height={15} />
            <FilterInput aria-label="筛选" />
            <FilterButton aria-label="过滤"><Small name="funnel" size={12} /></FilterButton>
            <FilterButton aria-label="属性"><Small name="notes" /></FilterButton>
          </FilterRow>
          <TreeHeader>
            <HeaderCell>装配节点</HeaderCell>
            <HeaderCell />
          </TreeHeader>
          <TreeList>
            {nodes.map((n, i) => (
              <TreeNode key={i} node={n} />
            ))}
          </TreeList>
        </Panel>
        <Viewport>
          <Model />
          <Measure>387.622 mm</Measure>
        </Viewport>
      </Body>

      <StatusBar>
        <StatusText>选择命令或实体</StatusText>
        <StatusPopup>
          <svg width="95" height="4" viewBox="0 0 95 4" aria-hidden="true">
            <path d="M2 4 V1 H12 V4" fill="#cfd3e2" stroke="#8b8fa6" strokeWidth=".8" />
            <path d="M20 3 H24 M57 1 L62 1 M57 3 H65 M73 2 L77 4" stroke="#2a2c30" strokeWidth="1.200" />
          </svg>
        </StatusPopup>
        <StatusRight>
          <ToolButton $on aria-label="栅格"><Small name="grid" size={11} /></ToolButton>
          <ToolButton aria-label="显示器"><Small name="monitor" /></ToolButton>
          <ToolButton aria-label="窗格"><Small name="pane" size={11} /></ToolButton>
          <StatusField><Highlight>选中1个</Highlight></StatusField>
        </StatusRight>
        <Brand>
          <BrandSwoosh width="86" height="28" viewBox="0 0 86 28" aria-hidden="true">
            <defs>
              <linearGradient id="swoosh" x1="0" x2="1">
                <stop offset="0" stopColor="#e3744a" />
                <stop offset="1" stopColor="#eda283" />
              </linearGradient>
              <linearGradient id="bar" x1="0" x2="1">
                <stop offset="0" stopColor="#6f8dd0" />
                <stop offset="1" stopColor="#e8edf8" />
              </linearGradient>
            </defs>
            <path d="M22 22 C14 28 1 28 1 18 C1 9 14 2 24 2 C34 2 33 12 20 16 L12 17 C16 16 26 12 25 7 C24 3 15 8 11 14 C7 21 11 25 22 22Z" fill="url(#swoosh)" />
            <path d="M21 17 H29 V20 H21Z" fill="#e0762c" />
            <path d="M31 22 H84 V26 H31Z" fill="url(#bar)" />
          </BrandSwoosh>
          wor<BrandAccent>k</BrandAccent>s
        </Brand>
      </StatusBar>
    </Window>
  );
}
